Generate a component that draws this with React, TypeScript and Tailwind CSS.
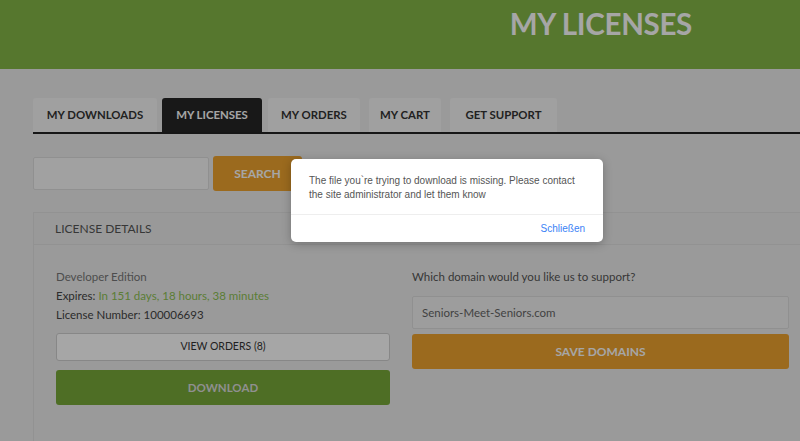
import { useState } from 'react';

const tabs = [
  { label: 'My Downloads', w: 'w-[124px]', ml: 'ml-0' },
  { label: 'My Licenses', w: 'w-[100px]', ml: 'ml-[5px]' },
  { label: 'My Orders', w: 'w-[92px]', ml: 'ml-[6px]' },
  { label: 'My Cart', w: 'w-[72px]', ml: 'ml-[9px]' },
  { label: 'Get Support', w: 'w-[107px]', ml: 'ml-[9px]' },
];

export default function App() {
  const [active, setActive] = useState('My Licenses');
  const [open, setOpen] = useState(true);
  const [domain, setDomain] = useState('Seniors-Meet-Seniors.com');

  return (
    <div className="relative min-h-[441px] w-[800px] overflow-hidden bg-[#ededed] font-['Lato','Open_Sans',sans-serif]">
      {/* Header */}
      <div className="flex h-[69px] items-start justify-end bg-[#84b748] pr-[108px] pt-[6px]">
        <h1 className="text-[29.5px] font-bold leading-[36px] tracking-[-0.3px] text-white">MY LICENSES</h1>
      </div>

      <div className="pl-[33px] pt-[29px]">
        {/* Tabs */}
        <div className="flex border-b-2 border-[#222]">
          {tabs.map(t => (
            <button
              key={t.label}
              onClick={() => setActive(t.label)}
              className={`h-[34px] rounded-t-[3px] text-[11.4px] font-bold uppercase ${t.w} ${t.ml} ${t.label === active ? 'bg-[#252525] text-white' : 'bg-[#f6f6f6] text-[#333]'}`}
            >
              {t.label}
            </button>
          ))}
        </div>

        {/* Search */}
        <div className="mt-[22px] flex items-center gap-[4px]">
          <input className="h-[33px] w-[176px] rounded-[2px] border border-[#ddd] bg-[#f7f7f7]" />
          <button className="h-[35px] w-[89px] rounded-[3px] bg-[#eea32e] text-[12px] font-bold text-white">SEARCH</button>
        </div>

        {/* License details */}
        <div className="mt-[21px] mr-[-20px] border border-[#e0e0e0]">
          <div className="flex h-[32px] items-center border-b border-[#e0e0e0] bg-[#ececec] pl-[21px] text-[12px] uppercase text-[#555]">
            License Details
          </div>
          <div className="flex gap-[22px] pb-[40px] pl-[22px] pt-[22px]">
            <div className="w-[334px] text-[11.5px]">
              <div className="leading-[19px] text-[#777]">Developer Edition</div>
              <div className="leading-[19px] text-[#444]">Expires: <span className="text-[#8cc152]">In 151 days, 18 hours, 38 minutes</span></div>
              <div className="leading-[19px] text-[#444]">License Number: 100006693</div>
              <button className="mt-[9px] flex h-[28px] w-full items-center justify-center rounded-[3px] border border-[#d0d0d0] bg-white text-[10.5px] text-[#333]">
                VIEW ORDERS (8)
              </button>
              <button className="mt-[9px] flex h-[35px] w-full items-center justify-center rounded-[3px] bg-[#78a93a] text-[11.5px] font-bold text-[#ddd]">
                DOWNLOAD
              </button>
            </div>
            <div className="w-[377px] text-[11.5px]">
              <div className="leading-[19px] text-[#555]">Which domain would you like us to support?</div>
              <input
                value={domain}
                onChange={e => setDomain(e.target.value)}
                className="mt-[10px] h-[33px] w-full rounded-[2px] border border-[#ddd] bg-[#f2f2f2] px-[9px] text-[11.5px] text-[#666] outline-none"
              />
              <button className="mt-[5px] flex h-[35px] w-full items-center justify-center rounded-[3px] bg-[#eea32e] text-[12px] font-bold text-white">
                SAVE DOMAINS
              </button>
            </div>
          </div>
        </div>
      </div>

      {/* Dialog */}
      {open && (
        <div className="absolute inset-0 bg-black/35">
          <div className="absolute left-[291px] top-[159px] w-[312px] rounded-[5px] bg-white font-['Liberation_Sans',sans-serif] shadow-[0_2px_10px_rgba(0,0,0,0.25)]">
            <p className="px-[18px] pb-[12px] pt-[15px] text-[10px] leading-[14px] text-[#555]">
              The file you`re trying to download is missing. Please contact the site administrator and let them know
            </p>
            <div className="flex h-[28px] items-center justify-end border-t border-[#eee] pr-[18px]">
              <button onClick={() => setOpen(false)} className="text-[10px] text-[#3b82f6]">Schließen</button>
            </div>
          </div>
        </div>
      )}
    </div>
  );
}
